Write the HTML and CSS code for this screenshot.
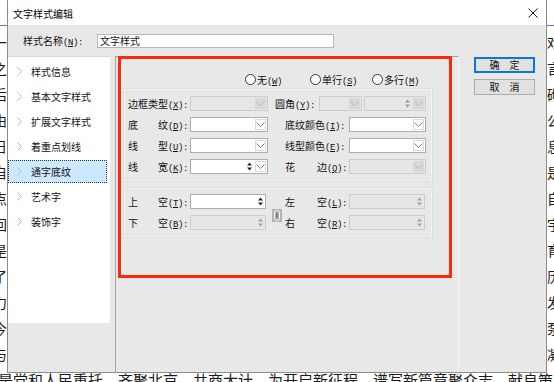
FILE: index.html
```html
<!DOCTYPE html>
<html lang="zh-CN">
<head>
<meta charset="utf-8">
<title>文字样式编辑</title>
<link rel="stylesheet" href="styles.css">
</head>
<body>
<div class="doc">
  <p class="dl"><span>一</span><span>戏</span></p>
  <p class="dl"><span>之</span><span>言</span></p>
  <p class="dl"><span>后</span><span>砌</span></p>
  <p class="dl"><span>由</span><span>公</span></p>
  <p class="dl"><span>日</span><span>息</span></p>
  <p class="dl"><span>自</span><span>是</span></p>
  <p class="dl"><span>点</span><span>自</span></p>
  <p class="dl"><span>回</span><span>宇</span></p>
  <p class="dl"><span>是</span><span>育</span></p>
  <p class="dl"><span>了</span><span>历</span></p>
  <p class="dl"><span>力</span><span>发</span></p>
  <p class="dl"><span>今</span><span>泵</span></p>
  <p class="dl"><span>与</span><span>凝</span></p>
  <p class="last">是党和人民重托，齐聚北京，共商大计，为开启新征程、谱写新篇章聚众志、献良策，</p>
</div>

<div class="dialog">
  <div class="titlebar">
    <span class="title">文字样式编辑</span>
    <svg class="close" width="10" height="10" viewBox="0 0 10 10"><path d="M0.5 0.5 L9.5 9.5 M9.5 0.5 L0.5 9.5" stroke="#222" stroke-width="1" fill="none"/></svg>
  </div>
  <div class="name-row">
    <span class="name-lbl">样式名称<span class="k">(<u>N</u>):</span></span>
    <div class="textbox">文字样式</div>
  </div>
  <div class="main">
    <ul class="nav">
      <li class="nav-item"><svg class="chev" width="5" height="9" viewBox="0 0 5 9"><polyline points="0.5,0.5 4.5,4.5 0.5,8.5" fill="none" stroke="#b8b8b8"/></svg><span>样式信息</span></li>
      <li class="nav-item"><svg class="chev" width="5" height="9" viewBox="0 0 5 9"><polyline points="0.5,0.5 4.5,4.5 0.5,8.5" fill="none" stroke="#b8b8b8"/></svg><span>基本文字样式</span></li>
      <li class="nav-item"><svg class="chev" width="5" height="9" viewBox="0 0 5 9"><polyline points="0.5,0.5 4.5,4.5 0.5,8.5" fill="none" stroke="#b8b8b8"/></svg><span>扩展文字样式</span></li>
      <li class="nav-item"><svg class="chev" width="5" height="9" viewBox="0 0 5 9"><polyline points="0.5,0.5 4.5,4.5 0.5,8.5" fill="none" stroke="#b8b8b8"/></svg><span>着重点划线</span></li>
      <li class="nav-item selected"><svg class="chev" width="5" height="9" viewBox="0 0 5 9"><polyline points="0.5,0.5 4.5,4.5 0.5,8.5" fill="none" stroke="#b8b8b8"/></svg><span>通字底纹</span></li>
      <li class="nav-item"><svg class="chev" width="5" height="9" viewBox="0 0 5 9"><polyline points="0.5,0.5 4.5,4.5 0.5,8.5" fill="none" stroke="#b8b8b8"/></svg><span>艺术字</span></li>
      <li class="nav-item"><svg class="chev" width="5" height="9" viewBox="0 0 5 9"><polyline points="0.5,0.5 4.5,4.5 0.5,8.5" fill="none" stroke="#b8b8b8"/></svg><span>装饰字</span></li>
    </ul>

    <div class="panel">
      <div class="radios">
        <label class="radio r1"><span class="dot"></span><span>无<span class="k">(<u>W</u>)</span></span></label>
        <label class="radio r2"><span class="dot"></span><span>单行<span class="k">(<u>S</u>)</span></span></label>
        <label class="radio"><span class="dot"></span><span>多行<span class="k">(<u>M</u>)</span></span></label>
      </div>

      <div class="group g1">
        <div class="row">
          <span class="lbl lbl-l"><span>边框类型<span class="k">(<u>X</u>):</span></span></span>
          <div class="combo dis w78"><span class="field"></span><span class="drop"><svg width="9" height="5" viewBox="0 0 9 5"><polyline points="0.5,0.5 4.5,4.5 8.5,0.5" fill="none" stroke="#b9b9b9"/></svg></span></div>
          <span class="lbl lbl-corner"><span>圆角<span class="k">(<u>Y</u>):</span></span></span>
          <div class="combo dis w43"><span class="field"></span><span class="drop"><svg width="9" height="5" viewBox="0 0 9 5"><polyline points="0.5,0.5 4.5,4.5 8.5,0.5" fill="none" stroke="#b9b9b9"/></svg></span></div>
          <div class="combo dis w62 ml2"><span class="field"></span><span class="spin"><svg width="5" height="9" viewBox="0 0 5 9"><path d="M2.5 0.5 L5 3.5 H0Z M2.5 8.5 L5 5.5 H0Z" fill="#9a9a9a"/></svg></span><span class="drop"><svg width="9" height="5" viewBox="0 0 9 5"><polyline points="0.5,0.5 4.5,4.5 8.5,0.5" fill="none" stroke="#b9b9b9"/></svg></span></div>
        </div>
        <div class="row">
          <span class="lbl lbl-l"><span>底</span><span>纹<span class="k">(<u>D</u>):</span></span></span>
          <div class="combo w78"><span class="field"></span><span class="drop"><svg width="9" height="5" viewBox="0 0 9 5"><polyline points="0.5,0.5 4.5,4.5 8.5,0.5" fill="none" stroke="#808080"/></svg></span></div>
          <span class="lbl lbl-r"><span>底纹颜色<span class="k">(<u>I</u>):</span></span></span>
          <div class="combo w77"><span class="field"></span><span class="drop"><svg width="9" height="5" viewBox="0 0 9 5"><polyline points="0.5,0.5 4.5,4.5 8.5,0.5" fill="none" stroke="#808080"/></svg></span></div>
        </div>
        <div class="row">
          <span class="lbl lbl-l"><span>线</span><span>型<span class="k">(<u>U</u>):</span></span></span>
          <div class="combo w78"><span class="field"></span><span class="drop"><svg width="9" height="5" viewBox="0 0 9 5"><polyline points="0.5,0.5 4.5,4.5 8.5,0.5" fill="none" stroke="#808080"/></svg></span></div>
          <span class="lbl lbl-r"><span>线型颜色<span class="k">(<u>E</u>):</span></span></span>
          <div class="combo w77"><span class="field"></span><span class="drop"><svg width="9" height="5" viewBox="0 0 9 5"><polyline points="0.5,0.5 4.5,4.5 8.5,0.5" fill="none" stroke="#808080"/></svg></span></div>
        </div>
        <div class="row">
          <span class="lbl lbl-l"><span>线</span><span>宽<span class="k">(<u>K</u>):</span></span></span>
          <div class="combo w78"><span class="field"></span><span class="spin"><svg width="5" height="9" viewBox="0 0 5 9"><path d="M2.5 0.5 L5 3.5 H0Z M2.5 8.5 L5 5.5 H0Z" fill="#222"/></svg></span><span class="drop"><svg width="9" height="5" viewBox="0 0 9 5"><polyline points="0.5,0.5 4.5,4.5 8.5,0.5" fill="none" stroke="#808080"/></svg></span></div>
          <span class="lbl lbl-r"><span>花</span><span>边<span class="k">(<u>Q</u>):</span></span></span>
          <div class="combo dis w77"><span class="field"></span><span class="drop"><svg width="9" height="5" viewBox="0 0 9 5"><polyline points="0.5,0.5 4.5,4.5 8.5,0.5" fill="none" stroke="#b9b9b9"/></svg></span></div>
        </div>
      </div>

      <div class="group g2">
        <div class="col">
          <div class="row">
            <span class="lbl lbl-l"><span>上</span><span>空<span class="k">(<u>T</u>):</span></span></span>
            <div class="combo w76"><span class="field"></span><span class="spin"><svg width="5" height="9" viewBox="0 0 5 9"><path d="M2.5 0.5 L5 3.5 H0Z M2.5 8.5 L5 5.5 H0Z" fill="#222"/></svg></span></div>
          </div>
          <div class="row">
            <span class="lbl lbl-l"><span>下</span><span>空<span class="k">(<u>B</u>):</span></span></span>
            <div class="combo dis w76"><span class="field"></span><span class="spin"><svg width="5" height="9" viewBox="0 0 5 9"><path d="M2.5 0.5 L5 3.5 H0Z M2.5 8.5 L5 5.5 H0Z" fill="#a0a0a0"/></svg></span></div>
          </div>
        </div>
        <span class="link-btn"><svg width="10" height="13" viewBox="0 0 10 13"><rect x="0" y="0" width="10" height="13" fill="#b4b4b4"/><rect x="2.5" y="1.5" width="5" height="10" rx="2" fill="none" stroke="#f4f4f4"/><path d="M5 4 V9" stroke="#555"/></svg></span>
        <div class="col col-r">
          <div class="row">
            <span class="lbl lbl-r"><span>左</span><span>空<span class="k">(<u>L</u>):</span></span></span>
            <div class="combo dis w76"><span class="field"></span><span class="spin"><svg width="5" height="9" viewBox="0 0 5 9"><path d="M2.5 0.5 L5 3.5 H0Z M2.5 8.5 L5 5.5 H0Z" fill="#a0a0a0"/></svg></span></div>
          </div>
          <div class="row">
            <span class="lbl lbl-r"><span>右</span><span>空<span class="k">(<u>R</u>):</span></span></span>
            <div class="combo dis w76"><span class="field"></span><span class="spin"><svg width="5" height="9" viewBox="0 0 5 9"><path d="M2.5 0.5 L5 3.5 H0Z M2.5 8.5 L5 5.5 H0Z" fill="#a0a0a0"/></svg></span></div>
          </div>
        </div>
      </div>
    </div>

    <div class="buttons">
      <button class="btn primary">确　定</button>
      <button class="btn">取　消</button>
    </div>
  </div>
</div>

<div class="annot"></div>
</body>
</html>
```
FILE: styles.css
```css
html, body {
  margin: 0;
  padding: 0;
}
body {
  width: 554px;
  height: 382px;
  overflow: hidden;
  background: #ffffff;
  position: relative;
  font-family: "Noto Sans CJK SC", sans-serif;
}

/* background document */
.doc {
  margin-top: 25px;
  border-top: 1px solid #8e5fd0;
  padding-top: 3px;
  color: #1a1a1a;
  font-size: 14px;
  line-height: 26px;
  white-space: nowrap;
}
.doc p {
  margin: 0;
}
.doc .dl {
  display: flex;
  justify-content: space-between;
  margin: 0 -7px 0 -7px;
  height: 26px;
}
.doc .last {
  font-size: 15px;
  margin-left: -2px;
}

/* dialog window */
.dialog {
  position: absolute;
  left: 7px;
  top: 0;
  width: 540px;
  height: 373px;
  box-sizing: border-box;
  border: 1px solid #8c8c8c;
  border-top: none;
  background: #e8e8e8;
  font-size: 10px;
  color: #111;
  display: flex;
  flex-direction: column;
}
.k {
  font-family: "Liberation Mono", monospace;
  font-size: 9px;
  letter-spacing: -0.4px;
}
.titlebar {
  height: 25px;
  background: #ffffff;
  display: flex;
  align-items: center;
  justify-content: space-between;
  padding: 0 8px 0 5px;
  flex: none;
}
.title {
  font-size: 10px;
  color: #000;
  padding-top: 2px;
}
.close {
  display: block;
}
.name-row {
  height: 31px;
  flex: none;
  display: flex;
  align-items: center;
  padding-left: 15px;
}
.name-lbl {
  width: 74px;
  flex: none;
}
.textbox {
  width: 237px;
  height: 14px;
  box-sizing: border-box;
  border: 1px solid #b8b8b8;
  background: #fff;
  padding-left: 2px;
  line-height: 12px;
  font-size: 10px;
}

.main {
  flex: 1;
  display: flex;
  align-items: stretch;
}

/* left navigation */
.nav {
  list-style: none;
  margin: 0;
  padding: 3px 0 0 0;
  width: 102px;
  height: 267px;
  box-sizing: border-box;
  background: #ffffff;
  border-top: 1px solid #d6d6d6;
  flex: none;
}
.nav-item {
  height: 23px;
  margin: 0 3px 2px 0;
  display: flex;
  align-items: center;
  padding-left: 9px;
  box-sizing: border-box;
  color: #111;
}
.nav-item .chev {
  margin-right: 9px;
  display: block;
}
.nav-item.selected {
  background: #cce8ff;
  outline: 1px dotted #333;
  outline-offset: -1px;
}

/* main panel */
.panel {
  margin-left: 5px;
  width: 344px;
  box-sizing: border-box;
  border-left: 1px solid #a6a6a6;
  border-top: 1px solid #a6a6a6;
  border-right: 1px solid #f4f4f4;
  flex: none;
}
.radios {
  margin-top: 15px;
  height: 14px;
  display: flex;
  align-items: center;
  padding-left: 129px;
}
.radio {
  display: flex;
  align-items: center;
}
.radio.r1 { width: 65px; }
.radio.r2 { width: 62px; }
.dot {
  width: 11px;
  height: 11px;
  box-sizing: border-box;
  border: 1px solid #333;
  border-radius: 50%;
  background: #fff;
  margin-right: 1px;
}

.group {
  margin-left: 8px;
  width: 308px;
  box-sizing: border-box;
  border: 1px solid #f3f3f3;
  box-shadow: 0 0 0 1px #dddddd;
  padding-left: 3px;
}
.g1 {
  margin-top: 3px;
  padding-top: 6px;
  padding-bottom: 6px;
  display: flex;
  flex-direction: column;
  gap: 6px;
}
.g2 {
  margin-top: 7px;
  padding-top: 5px;
  padding-bottom: 6px;
  display: flex;
}
.col {
  display: flex;
  flex-direction: column;
  gap: 6px;
}
.row {
  display: flex;
  align-items: center;
  height: 15px;
}
.lbl {
  display: flex;
  justify-content: space-between;
  flex: none;
  white-space: nowrap;
}
.lbl-l {
  width: 60px;
  margin-right: 2px;
}
.lbl-corner {
  width: 42px;
  margin-left: 7px;
  margin-right: 2px;
}
.g1 .lbl-r {
  width: 62px;
  margin-left: 17px;
  margin-right: 2px;
}
.col-r .lbl-r {
  width: 62px;
  margin-right: 2px;
}
.col-r {
  margin-left: 3px;
}
.link-btn {
  margin-left: 6px;
  margin-top: 15px;
  width: 10px;
  height: 13px;
  flex: none;
}
.link-btn svg {
  display: block;
}

/* controls */
.combo {
  display: flex;
  height: 15px;
  box-sizing: border-box;
  border: 1px solid #acacac;
  background: #ffffff;
  flex: none;
}
.combo .field {
  flex: 1;
}
.combo .drop {
  width: 11px;
  margin: 1px;
  box-sizing: border-box;
  border: 1px solid #dadada;
  display: flex;
  align-items: center;
  justify-content: center;
}
.combo .spin {
  width: 8px;
  display: flex;
  align-items: center;
  justify-content: center;
  margin-right: 1px;
}
.combo svg {
  display: block;
}
.combo.dis {
  background: #e6e6e6;
  border-color: #cdcdcd;
}
.combo.dis .drop {
  background: #d8d8d8;
  border-color: #d8d8d8;
}
.w78 { width: 78px; }
.w77 { width: 77px; }
.w76 { width: 76px; }
.w62 { width: 62px; }
.w43 { width: 43px; }
.ml2 { margin-left: 2px; }

/* buttons */
.buttons {
  margin-left: 15px;
  margin-top: 1px;
  display: flex;
  flex-direction: column;
  gap: 6px;
}
.btn {
  width: 61px;
  height: 16px;
  box-sizing: border-box;
  border: 1px solid #adadad;
  background: #e1e1e1;
  font-family: "Noto Sans CJK SC", sans-serif;
  font-size: 10px;
  color: #111;
  padding: 0;
  display: flex;
  align-items: center;
  justify-content: center;
  line-height: 1;
}
.btn.primary {
  border: 2px solid #0a78d7;
}

/* red annotation rectangle */
.annot {
  position: absolute;
  left: 118px;
  top: 56px;
  width: 334px;
  height: 222px;
  box-sizing: border-box;
  border: 3px solid #fb2a0c;
}
```
